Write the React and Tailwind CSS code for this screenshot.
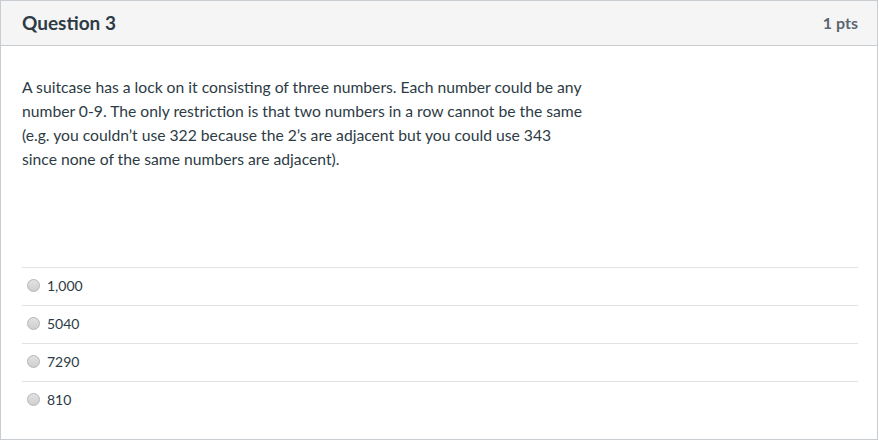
export default function App() {
  const answers = ["1,000", "5040", "7290", "810"];
  return (
    <div className="w-[879px] h-[441px] bg-white" style={{ fontFamily: "Lato, 'Liberation Sans', sans-serif" }}>
      <div className="w-[878px] h-[440px] border border-[#c7cdd1] flex flex-col">
        <div className="h-[45px] shrink-0 bg-[#f5f5f5] border-b border-[#c7cdd1] flex items-center justify-between pl-[21px] pr-[19px]">
          <span className="text-[19px] font-bold text-[#2d3b45]">Question 3</span>
          <span className="text-[16px] font-bold text-[#5b6670]">1 pts</span>
        </div>
        <div className="px-[21px] pt-[29px]">
          <p className="w-[568px] text-[15.7px] leading-[24px] text-[#2d3b45]">
            A suitcase has a lock on it consisting of three numbers. Each number could be any number 0-9. The only restriction is that two numbers in a row cannot be the same (e.g. you couldn’t use 322 because the 2’s are adjacent but you could use 343 since none of the same numbers are adjacent).
          </p>
        </div>
        <div className="ml-[21px] mr-[19px] mt-[96px]">
          {answers.map((a) => (
            <div key={a} className="h-[38px] border-t border-[#dfe3e6] flex items-center pl-[5px] pb-[3px]">
              <span className="w-[13px] h-[13px] rounded-full border border-[#b5b5b5] bg-gradient-to-b from-[#e2e2e2] to-[#cfcfcf] shrink-0"></span>
              <span className="ml-[7px] text-[14px] text-[#2d3b45]">{a}</span>
            </div>
          ))}
        </div>
      </div>
    </div>
  );
}
